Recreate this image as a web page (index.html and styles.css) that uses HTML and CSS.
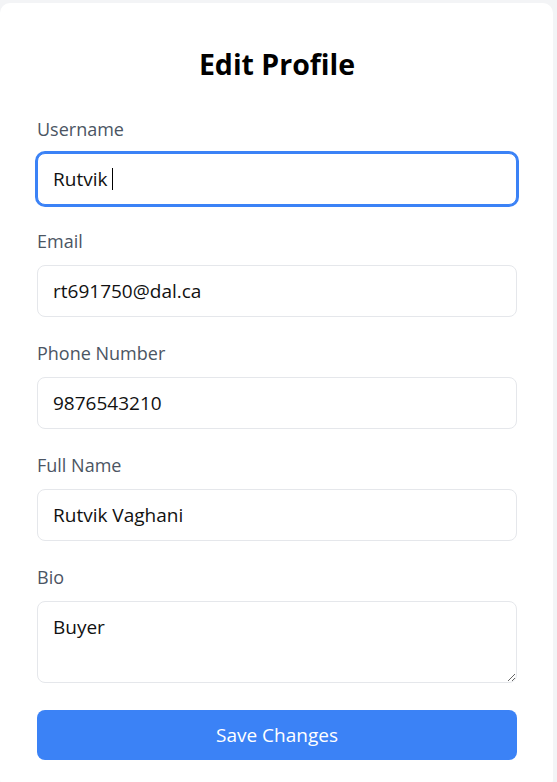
FILE: index.html
```html
<!DOCTYPE html>
<html lang="en">
<head>
<meta charset="utf-8">
<title>Edit Profile</title>
<link rel="stylesheet" href="styles.css">
</head>
<body>
  <main class="card">
    <h2 class="title">Edit Profile</h2>
    <form class="form">
      <div class="field">
        <label class="label">Username</label>
        <div class="input input-focus" role="textbox">Rutvik <span class="caret"></span></div>
      </div>
      <div class="field">
        <label class="label">Email</label>
        <input class="input" type="text" value="rt691750@dal.ca">
      </div>
      <div class="field">
        <label class="label">Phone Number</label>
        <input class="input" type="text" value="9876543210">
      </div>
      <div class="field">
        <label class="label">Full Name</label>
        <input class="input" type="text" value="Rutvik Vaghani">
      </div>
      <div class="field">
        <label class="label">Bio</label>
        <textarea class="input textarea">Buyer</textarea>
      </div>
      <button type="button" class="btn">Save Changes</button>
    </form>
  </main>
</body>
</html>
```
FILE: styles.css
```css
* { box-sizing: border-box; }
html, body { margin: 0; padding: 0; }
body {
  background: #f3f4f6;
  font-family: "Open Sans", "Noto Sans", sans-serif;
  color: #111;
}
.card {
  margin-top: 3px;
  width: 553px;
  background: #fff;
  border-radius: 10px;
  padding: 43px 36px 30px 37px;
}
.title {
  margin: 0 0 35px;
  text-align: center;
  font-size: 28.5px;
  line-height: 36px;
  font-weight: 700;
  color: #000;
}
.form { display: flex; flex-direction: column; }
.field { display: flex; flex-direction: column; margin-bottom: 24px; }
.label {
  font-size: 18px;
  line-height: 24px;
  color: #4b5563;
  margin-bottom: 12px;
}
.input {
  width: 480px;
  height: 52px;
  border: 1px solid #e5e7eb;
  border-radius: 8px;
  padding: 13px 15px;
  font-family: inherit;
  font-size: 19px;
  line-height: 24px;
  color: #111;
  background: #fff;
  outline: none;
}
.input-focus {
  border-color: #3b82f6;
  box-shadow: 0 0 0 2px #3b82f6;
  display: flex;
  align-items: center;
  white-space: pre;
}
.caret {
  display: inline-block;
  width: 1px;
  height: 22px;
  background: #000;
}
.textarea {
  height: 82px;
  resize: vertical;
  display: block;
}
.field:last-of-type { margin-bottom: 27px; }
.btn {
  width: 480px;
  height: 50px;
  border: none;
  border-radius: 8px;
  background: #3b82f6;
  color: #fff;
  font-family: inherit;
  font-size: 19px;
}
```
